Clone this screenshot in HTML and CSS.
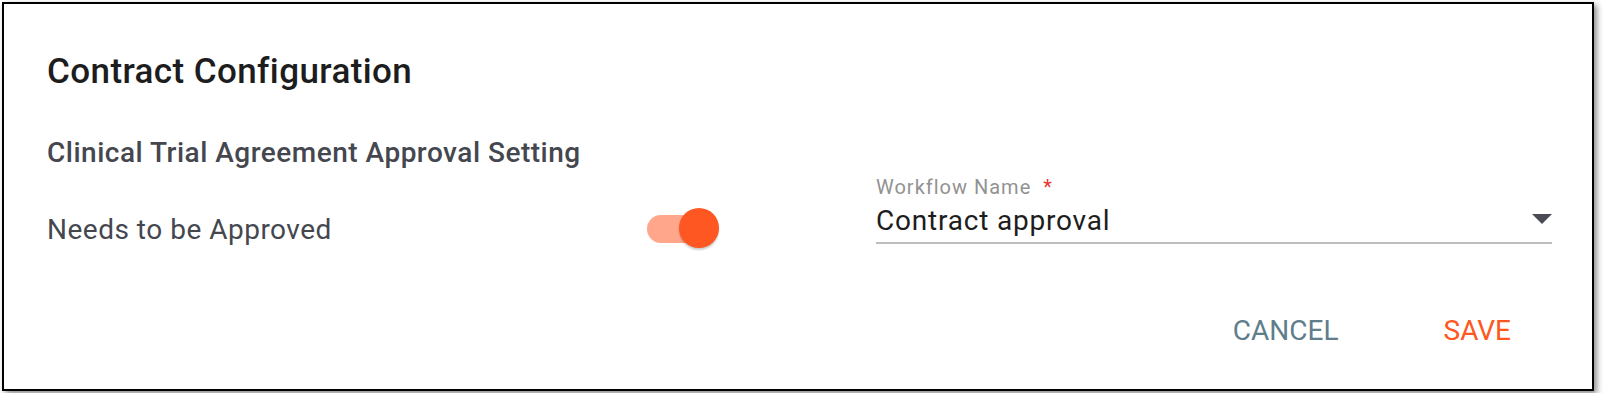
FILE: index.html
```html
<!DOCTYPE html>
<html>
<head>
<meta charset="utf-8">
<link rel="stylesheet" href="styles.css">
</head>
<body>
<div class="card">
  <h1 class="title">Contract Configuration</h1>
  <h2 class="section">Clinical Trial Agreement Approval Setting</h2>
  <div class="row">
    <div class="setting">
      <span class="setting-label">Needs to be Approved</span>
      <span class="switch"><span class="track"></span><span class="thumb"></span></span>
    </div>
    <div class="field">
      <div class="field-label">Workflow Name <span class="req">*</span></div>
      <div class="field-input">
        <span class="value">Contract approval</span>
        <svg class="arrow" width="20" height="10" viewBox="0 0 20 10"><path d="M0 0H20L10 10Z" fill="#4b4b55"/></svg>
      </div>
    </div>
  </div>
  <div class="actions">
    <button class="btn btn-cancel">CANCEL</button>
    <button class="btn btn-save">SAVE</button>
  </div>
</div>
</body>
</html>
```

FILE: styles.css
```css
* { box-sizing: border-box; }
html, body { margin: 0; padding: 0; background: #fff; }
body { padding: 2px; font-family: Roboto, "Liberation Sans", sans-serif; }
.card {
  width: 1592px;
  height: 389px;
  border: 2px solid #000;
  box-shadow: 3px 3px 6px rgba(0,0,0,0.45);
  background: #fff;
  padding: 48px 40px 0 43px;
}
.title {
  margin: 0;
  font-size: 35px;
  line-height: 40px;
  font-weight: 500;
  letter-spacing: 0.4px;
  color: #1d1d20;
}
.section {
  margin: 45px 0 0;
  font-size: 28px;
  line-height: 32px;
  font-weight: 500;
  letter-spacing: 0.5px;
  color: #45474f;
}
.row {
  display: flex;
  align-items: flex-start;
}
.setting {
  width: 672px;
  margin-top: 39px;
  height: 41px;
  display: flex;
  align-items: center;
  justify-content: space-between;
}
.setting-label {
  font-size: 28px;
  color: #45474f;
  letter-spacing: 0.5px;
  padding-top: 1px;
}
.switch {
  position: relative;
  width: 72px;
  height: 41px;
  display: flex;
  align-items: center;
}
.track {
  width: 68px;
  height: 28px;
  border-radius: 14px;
  background: #ffa68b;
}
.thumb {
  position: absolute;
  right: 0;
  top: 0;
  width: 40px;
  height: 40px;
  border-radius: 50%;
  background: #ff5722;
  box-shadow: 0 2px 2px rgba(0,0,0,0.2);
}
.field {
  margin-left: 157px;
  width: 676px;
  margin-top: 7px;
}
.field-label {
  font-size: 20px;
  line-height: 22px;
  color: #929292;
  letter-spacing: 1px;
}
.req { color: #e53935; margin-left: 6px; }
.field-input {
  margin-top: 5px;
  display: flex;
  align-items: center;
  justify-content: space-between;
  border-bottom: 2px solid #bdbdbd;
  padding-bottom: 3px;
}
.value {
  font-size: 28px;
  line-height: 36px;
  color: #1d1d20;
  letter-spacing: 0.8px;
}
.arrow { display: block; margin-top: -4px; }
.actions {
  display: flex;
  justify-content: flex-end;
  gap: 49px;
  margin-top: 50px;
}
.btn {
  font-family: Roboto, "Liberation Sans", sans-serif;
  font-size: 28px;
  line-height: 63px;
  height: 63px;
  padding: 0 28px;
  border: 0;
  background: transparent;
  cursor: pointer;
}
.btn-cancel { color: #607d8b; }
.btn-save { color: #ff5722; margin-right: 13px; }
```
